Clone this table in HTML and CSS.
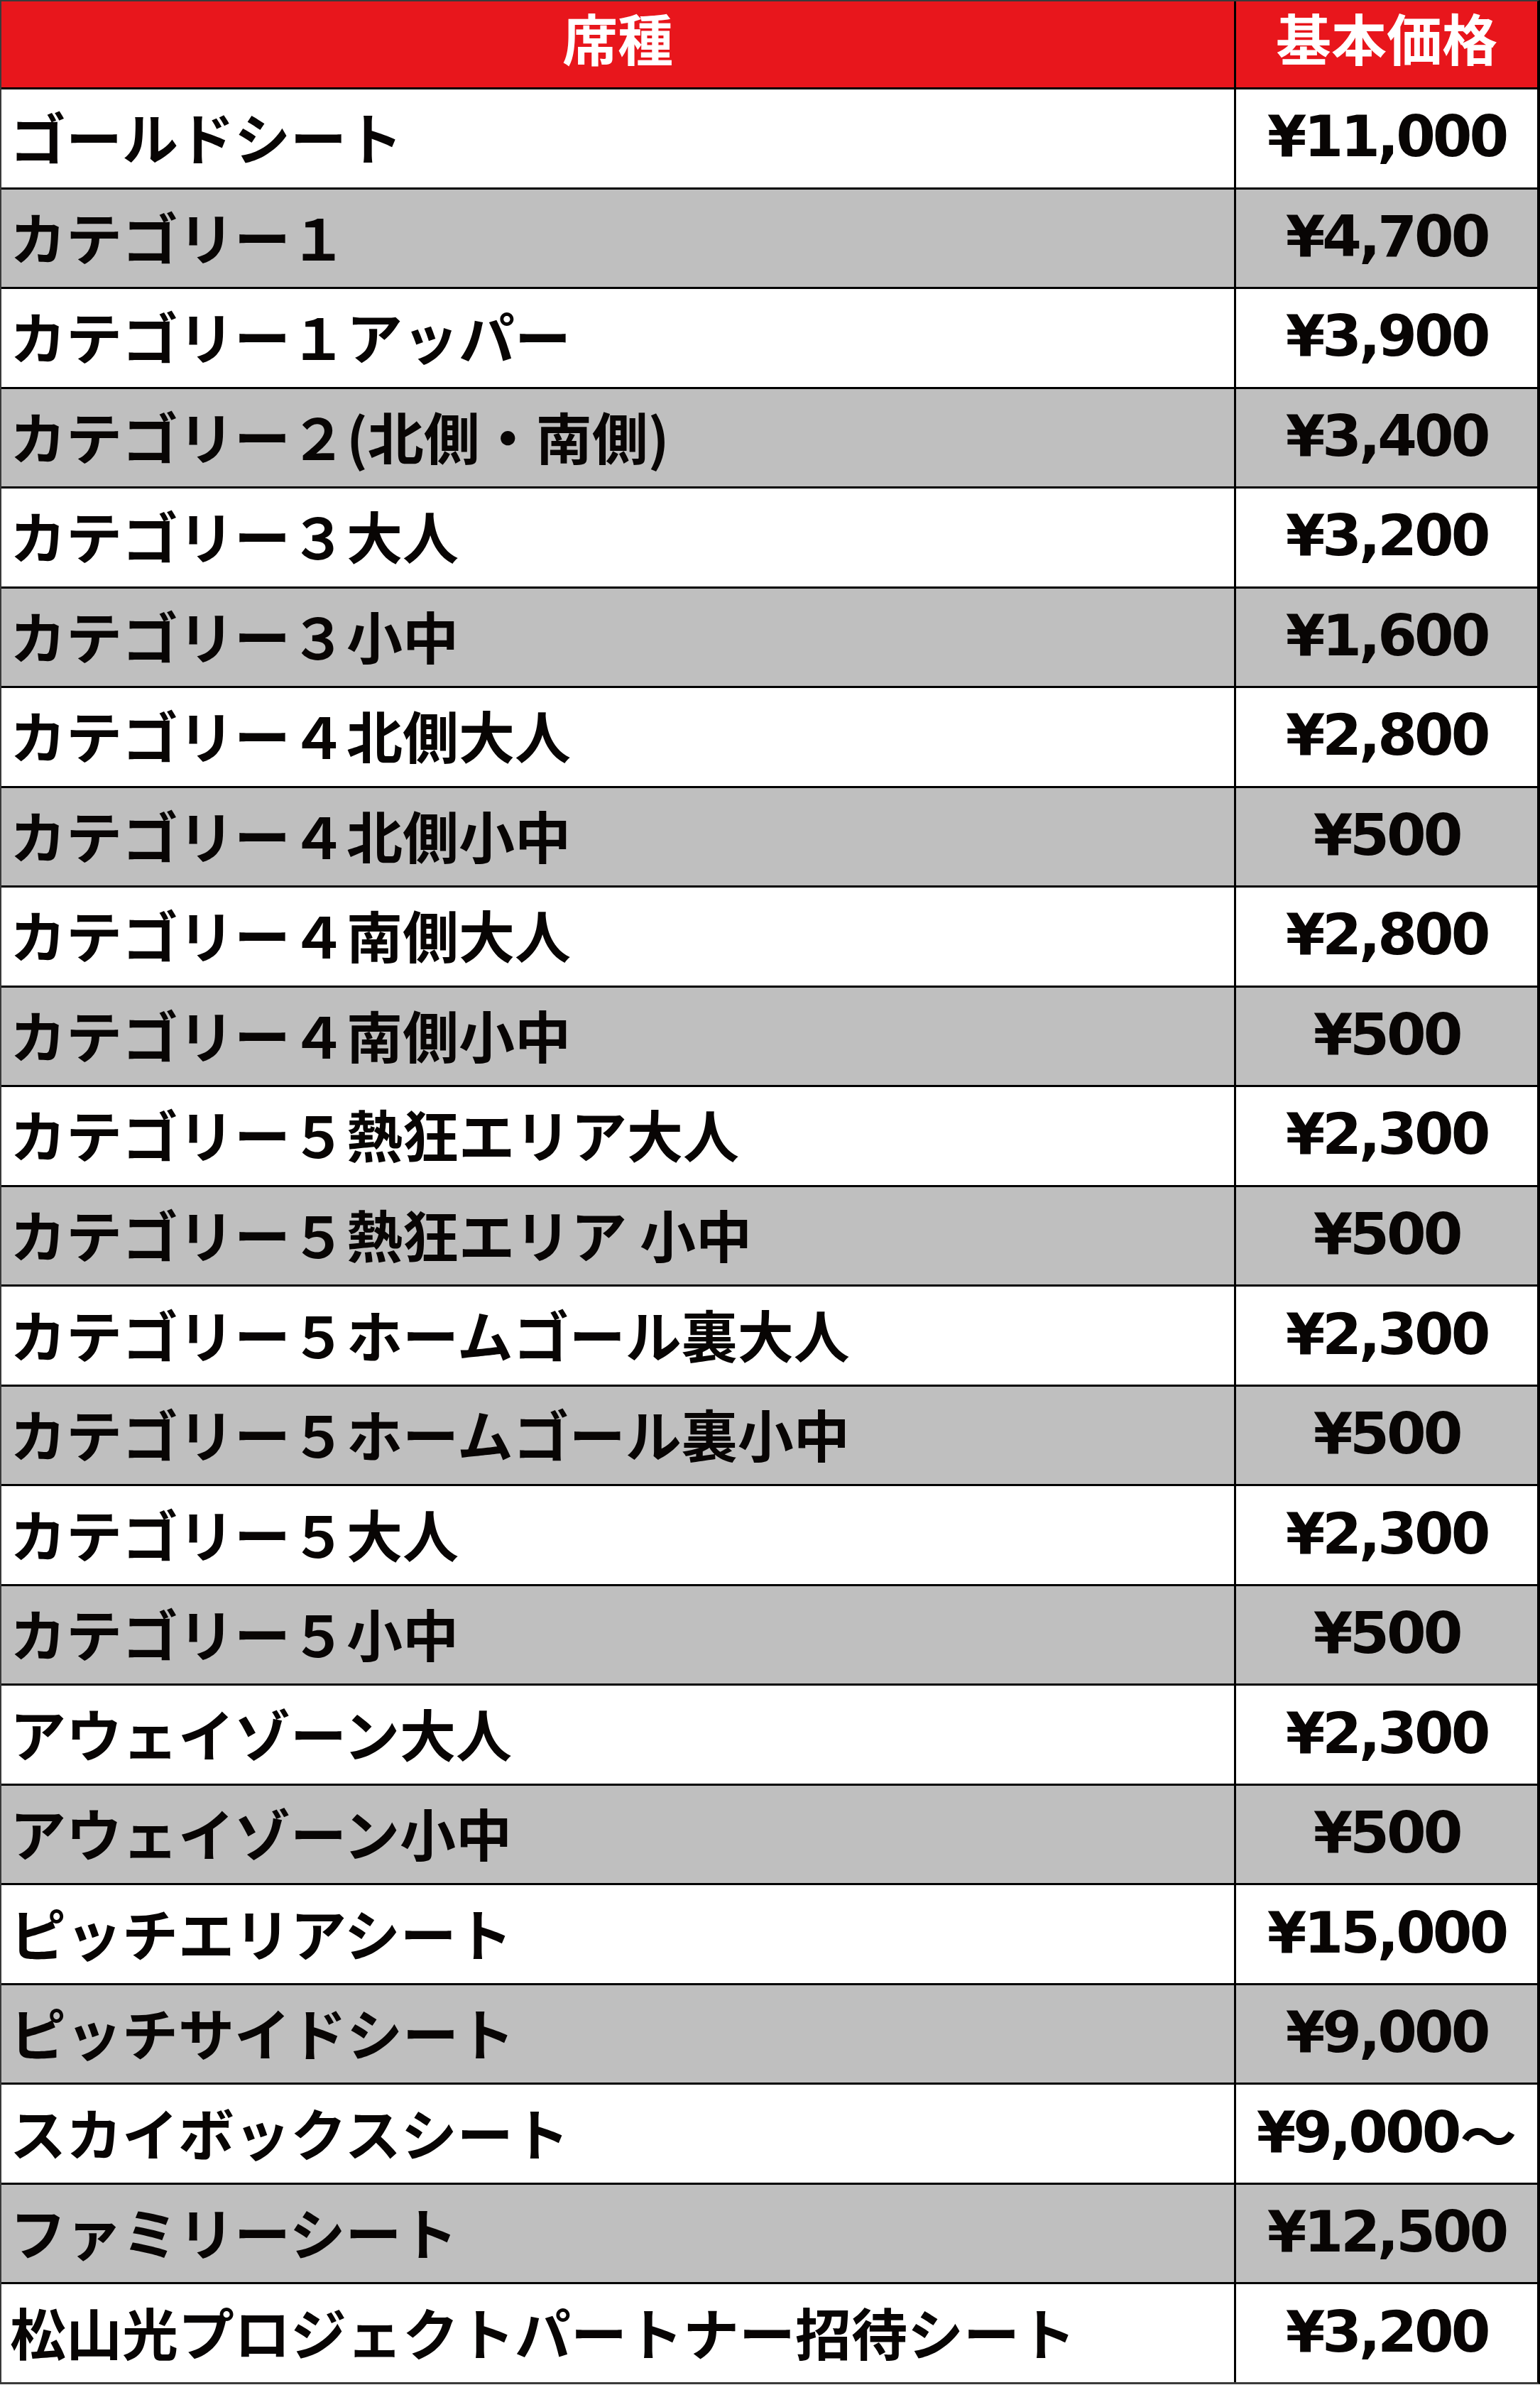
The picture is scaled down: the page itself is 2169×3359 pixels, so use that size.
FILE: index.html
```html
<!DOCTYPE html>
<html lang="ja">
<head>
<meta charset="utf-8">
<title>席種・基本価格</title>
<link rel="stylesheet" href="styles.css">
</head>
<body>
<div class="price-table">
  <div class="row head"><div class="cell name">席種</div><div class="cell price">基本価格</div></div>
  <div class="row"><div class="cell name">ゴールドシート</div><div class="cell price">¥11,000</div></div>
  <div class="row alt"><div class="cell name">カテゴリー１</div><div class="cell price">¥4,700</div></div>
  <div class="row"><div class="cell name">カテゴリー１アッパー</div><div class="cell price">¥3,900</div></div>
  <div class="row alt"><div class="cell name">カテゴリー２(北側・南側)</div><div class="cell price">¥3,400</div></div>
  <div class="row"><div class="cell name">カテゴリー３大人</div><div class="cell price">¥3,200</div></div>
  <div class="row alt"><div class="cell name">カテゴリー３小中</div><div class="cell price">¥1,600</div></div>
  <div class="row"><div class="cell name">カテゴリー４北側大人</div><div class="cell price">¥2,800</div></div>
  <div class="row alt"><div class="cell name">カテゴリー４北側小中</div><div class="cell price">¥500</div></div>
  <div class="row"><div class="cell name">カテゴリー４南側大人</div><div class="cell price">¥2,800</div></div>
  <div class="row alt"><div class="cell name">カテゴリー４南側小中</div><div class="cell price">¥500</div></div>
  <div class="row"><div class="cell name">カテゴリー５熱狂エリア大人</div><div class="cell price">¥2,300</div></div>
  <div class="row alt"><div class="cell name">カテゴリー５熱狂エリア 小中</div><div class="cell price">¥500</div></div>
  <div class="row"><div class="cell name">カテゴリー５ホームゴール裏大人</div><div class="cell price">¥2,300</div></div>
  <div class="row alt"><div class="cell name">カテゴリー５ホームゴール裏小中</div><div class="cell price">¥500</div></div>
  <div class="row"><div class="cell name">カテゴリー５大人</div><div class="cell price">¥2,300</div></div>
  <div class="row alt"><div class="cell name">カテゴリー５小中</div><div class="cell price">¥500</div></div>
  <div class="row"><div class="cell name">アウェイゾーン大人</div><div class="cell price">¥2,300</div></div>
  <div class="row alt"><div class="cell name">アウェイゾーン小中</div><div class="cell price">¥500</div></div>
  <div class="row"><div class="cell name">ピッチエリアシート</div><div class="cell price">¥15,000</div></div>
  <div class="row alt"><div class="cell name">ピッチサイドシート</div><div class="cell price">¥9,000</div></div>
  <div class="row"><div class="cell name">スカイボックスシート</div><div class="cell price">¥9,000<span class="wave">～</span></div></div>
  <div class="row alt"><div class="cell name">ファミリーシート</div><div class="cell price">¥12,500</div></div>
  <div class="row"><div class="cell name">松山光プロジェクトパートナー招待シート</div><div class="cell price">¥3,200</div></div>
</div>
</body>
</html>
```

FILE: styles.css
```css
html, body {
  margin: 0;
  padding: 0;
  background: #ffffff;
}

.price-table {
  box-sizing: border-box;
  width: 2169px;
  height: 3358px;
  display: grid;
  grid-template-columns: 1736px 1fr;
  grid-template-rows: 121px repeat(23, 1fr);
  gap: 3px;
  background: #000000;
  border-top: 2px solid #3a3a3a;
  border-left: 2px solid #3a3a3a;
  border-right: 4px solid #000000;
  border-bottom: 3px solid #3a3a3a;
  font-family: "Noto Sans CJK JP", "Noto Sans", sans-serif;
  font-weight: 700;
  color: #080504;
}

.row {
  display: contents;
}

.cell {
  display: flex;
  align-items: center;
  background: #ffffff;
  line-height: 1;
  white-space: nowrap;
}

.row.alt .cell {
  background: #bfbfbf;
}

.name {
  font-size: 79px;
  padding-left: 12px;
  padding-bottom: 6px;
}

.price {
  justify-content: center;
  font-family: "DejaVu Sans", "Liberation Sans", sans-serif;
  font-weight: 700;
  font-size: 80px;
  letter-spacing: -4px;
  padding-bottom: 3px;
}

.wave {
  font-family: "Noto Sans CJK JP", sans-serif;
  font-weight: 700;
  font-size: 80px;
  letter-spacing: 0;
  margin-left: 2px;
}

.row.head .cell {
  background: #e8161c;
  color: #ffffff;
  justify-content: center;
  font-family: "Noto Sans CJK JP", "Noto Sans", sans-serif;
  font-size: 78px;
  letter-spacing: 0;
  padding: 0 0 22px 0;
}
```
